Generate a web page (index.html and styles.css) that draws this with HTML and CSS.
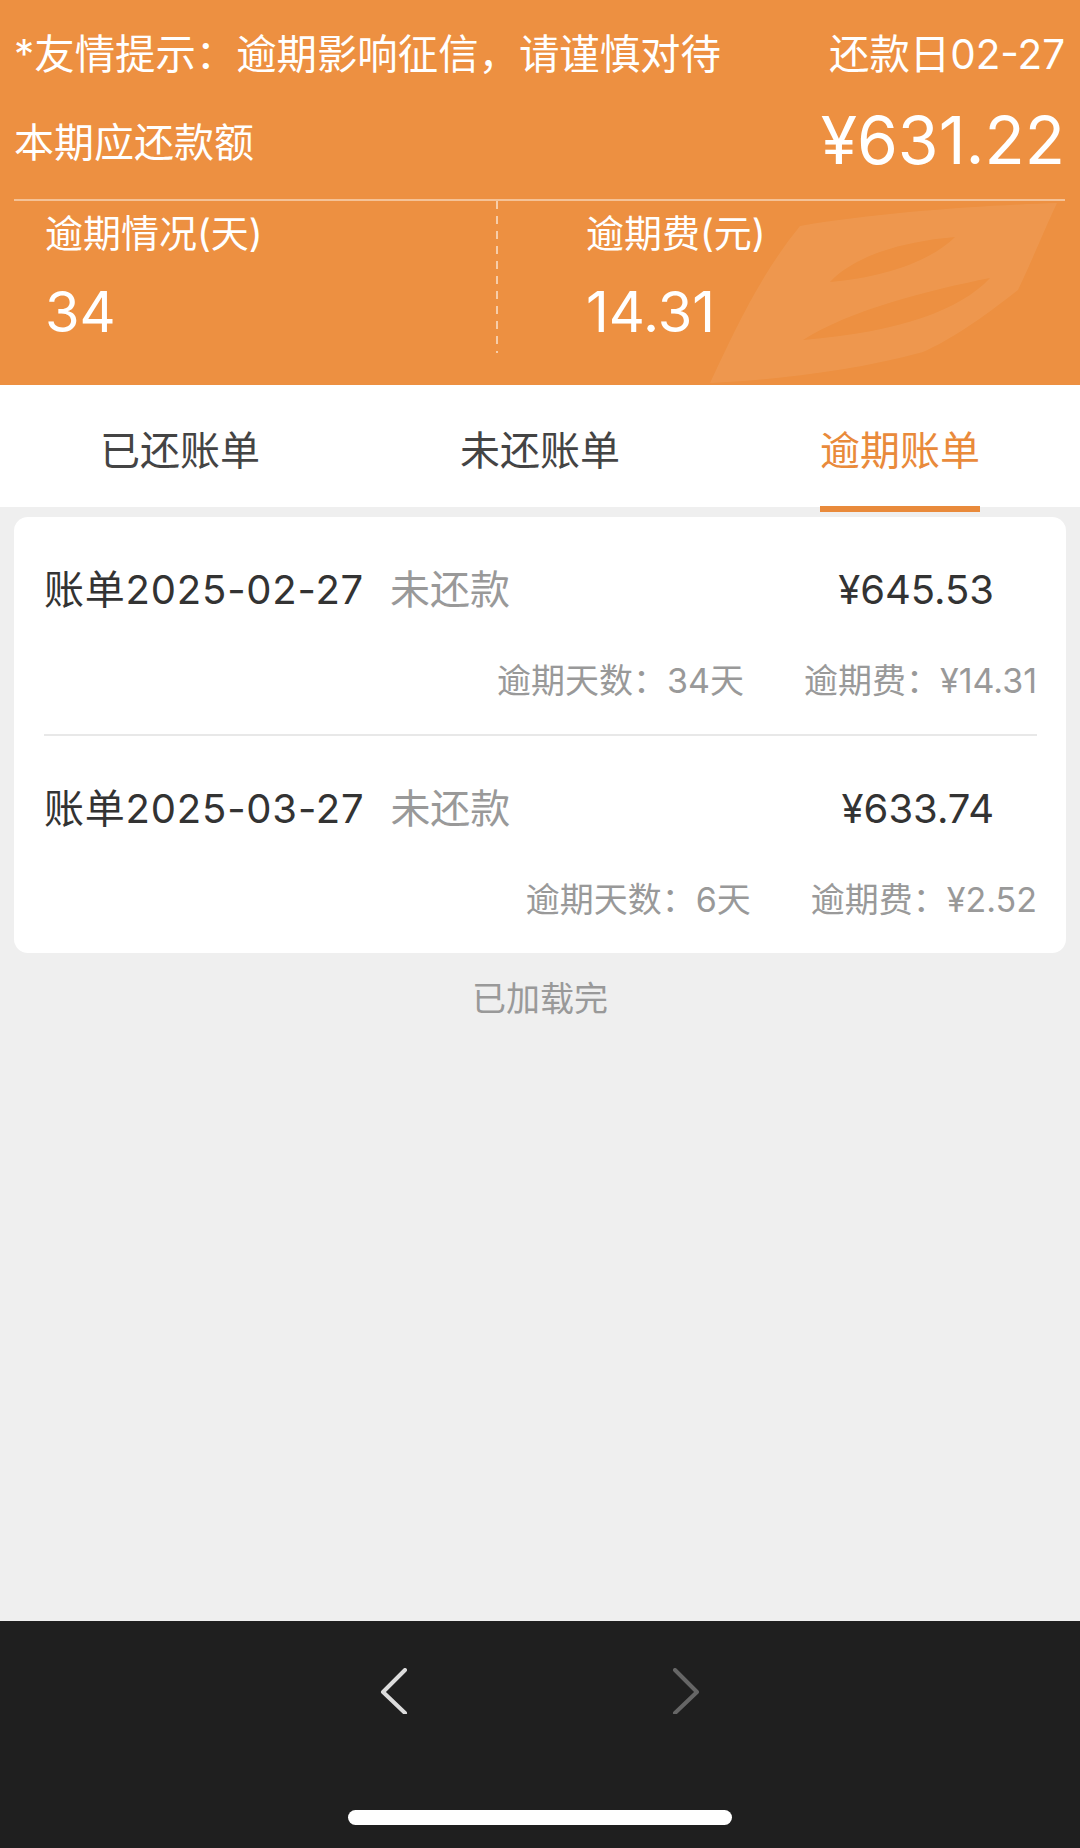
FILE: index.html
```html
<!DOCTYPE html>
<html lang="zh-CN">
<head>
    <meta charset="UTF-8">
    <meta name="viewport" content="width=device-width, initial-scale=1.0">
    <title>逾期账单</title>
    <link rel="stylesheet" href="styles.css">
</head>
<body>

<div class="page">
    <div class="header">
        <svg class="header-mark" viewBox="0 0 1080 385" preserveAspectRatio="none">
            <path fill-rule="evenodd" d="M710 383 C735 330 760 275 800 226 C880 212 990 205 1057 203 C1040 240 1030 265 1018 290 C980 320 950 340 923 352 C850 372 770 380 710 383 Z M830 282 C860 250 920 240 955 237 C930 262 880 278 830 282 Z M803 340 C850 310 930 290 990 278 C960 310 900 332 803 340 Z"/>
        </svg>
        <div class="tip-row">
            <span>*友情提示：逾期影响征信，请谨慎对待</span>
            <span>还款日02-27</span>
        </div>
        <div class="amount-row">
            <span class="amount-label">本期应还款额</span>
            <span class="amount-big">¥631.22</span>
        </div>
        <div class="stats">
            <div class="stat">
                <div class="stat-label">逾期情况(天)</div>
                <div class="stat-value">34</div>
            </div>
            <div class="stat stat-right">
                <div class="stat-label">逾期费(元)</div>
                <div class="stat-value">14.31</div>
            </div>
        </div>
    </div>

    <div class="tabs">
        <div class="tab"><span>已还账单</span></div>
        <div class="tab"><span>未还账单</span></div>
        <div class="tab active"><span>逾期账单</span></div>
    </div>

    <div class="content">
        <div class="card">
            <div class="bill">
                <div class="bill-top">
                    <span class="bill-name">账单2025-02-27<span class="bill-status">未还款</span></span>
                    <span class="bill-amount">¥645.53</span>
                </div>
                <div class="bill-info">
                    <span>逾期天数：34天</span>
                    <span>逾期费：¥14.31</span>
                </div>
            </div>
            <div class="bill">
                <div class="bill-top">
                    <span class="bill-name">账单2025-03-27<span class="bill-status">未还款</span></span>
                    <span class="bill-amount">¥633.74</span>
                </div>
                <div class="bill-info">
                    <span>逾期天数：6天</span>
                    <span>逾期费：¥2.52</span>
                </div>
            </div>
        </div>
        <div class="loaded">已加载完</div>
    </div>

    <div class="bottom-bar">
        <div class="nav">
            <svg class="nav-btn" viewBox="0 0 28 46"><path d="M25 2 L3 24 L25 45" stroke="#dcdcdc"/></svg>
            <svg class="nav-btn" viewBox="0 0 28 46"><path d="M3 2 L25 24 L3 45" stroke="#666666"/></svg>
        </div>
        <div class="home-indicator"></div>
    </div>
</div>

</body>
</html>
```

FILE: styles.css
```css
body {
    margin: 0;
    font-family: Inter, "Noto Sans CJK SC", sans-serif;
    background-color: #efefef;
}
.page {
    width: 1080px;
    height: 1848px;
    display: flex;
    flex-direction: column;
}
.header {
    position: relative;
    height: 385px;
    box-sizing: border-box;
    padding: 30px 15px 0 14px;
    background-color: #ed9041;
    color: #fff;
    overflow: hidden;
}
.header-mark {
    position: absolute;
    left: 0;
    top: 0;
    width: 1080px;
    height: 385px;
    fill: rgba(255, 255, 255, 0.07);
}
.tip-row, .amount-row, .stats {
    position: relative;
}
.tip-row {
    display: flex;
    justify-content: space-between;
    font-size: 40.4px;
    line-height: 50px;
}
.amount-row {
    display: flex;
    justify-content: space-between;
    align-items: center;
    margin-top: 20px;
    height: 80px;
    border-bottom: 2px solid rgba(255, 255, 255, 0.45);
    padding-bottom: 19px;
}
.amount-label {
    font-size: 40px;
}
.amount-big {
    font-size: 66px;
    line-height: 80px;
}
.stats {
    display: grid;
    grid-template-columns: 482px 1fr;
    height: 152px;
}
.stat {
    padding: 7px 0 0 31px;
}
.stat-right {
    padding-left: 90px;
    background-image: repeating-linear-gradient(to bottom, rgba(255, 255, 255, 0.55) 0 8px, transparent 8px 15px);
    background-size: 2px 100%;
    background-repeat: no-repeat;
}
.stat-label {
    font-size: 38px;
    line-height: 50px;
}
.stat-value {
    font-size: 56px;
    line-height: 70px;
    margin-top: 19px;
}
.tabs {
    display: flex;
    height: 122px;
    background-color: #fff;
}
.tab {
    flex: 1;
    text-align: center;
    padding-top: 41px;
    font-size: 40px;
    color: #444;
}
.tab span {
    display: inline-block;
    line-height: 40px;
    padding-bottom: 35px;
    border-bottom: 6px solid transparent;
}
.tab.active {
    color: #e98a3b;
}
.tab.active span {
    border-bottom-color: #e98a3b;
}
.content {
    flex: 1;
    padding: 10px 14px 0;
}
.card {
    background-color: #fff;
    border-radius: 14px;
    padding: 0 29px 0 30px;
}
.bill {
    padding: 49px 0 33px;
}
.bill + .bill {
    border-top: 2px solid #e8e8e8;
}
.bill-top {
    display: flex;
    justify-content: space-between;
    font-size: 40px;
    line-height: 48px;
    color: #333;
}
.bill-name {
    letter-spacing: 0.8px;
}
.bill-status {
    color: #999;
    margin-left: 26px;
    letter-spacing: 0;
}
.bill-amount {
    padding-right: 43px;
}
.bill-info {
    display: flex;
    justify-content: flex-end;
    gap: 60px;
    margin-top: 47px;
    font-size: 34px;
    line-height: 40px;
    color: #999;
}
.loaded {
    text-align: center;
    margin-top: 21px;
    font-size: 34px;
    line-height: 50px;
    color: #999;
}
.bottom-bar {
    height: 227px;
    background-color: #1f1f1f;
    padding-top: 47px;
    box-sizing: border-box;
}
.nav {
    display: flex;
    justify-content: center;
    gap: 264px;
}
.nav-btn {
    width: 28px;
    height: 46px;
    fill: none;
    stroke-width: 4;
    stroke-linecap: round;
    stroke-linejoin: round;
}
.home-indicator {
    width: 384px;
    height: 15px;
    margin: 96px auto 0;
    border-radius: 8px;
    background-color: #fff;
}
```
